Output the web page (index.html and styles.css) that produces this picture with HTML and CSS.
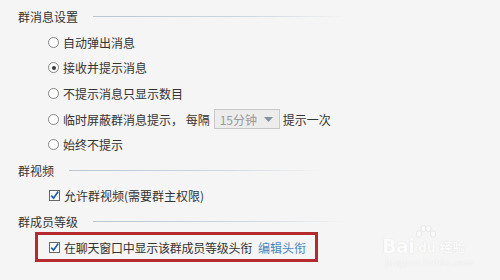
FILE: index.html
```html
<!DOCTYPE html>
<html lang="zh">
<head>
<meta charset="utf-8">
<link rel="stylesheet" href="styles.css">
</head>
<body>
<div class="page">
  <div class="heading"><span>群消息设置</span><i class="rule"></i></div>
  <div class="row opt"><span class="radio"></span>自动弹出消息</div>
  <div class="row opt"><span class="radio on"></span>接收并提示消息</div>
  <div class="row opt"><span class="radio"></span>不提示消息只显示数目</div>
  <div class="row opt"><span class="radio"></span>临时屏蔽群消息提示，&nbsp;每隔<span class="select"><span class="val">15分钟</span><svg class="arrow" width="9" height="5" viewBox="0 0 9 5"><path d="M0 0H9L4.5 5Z" fill="#8391a0"/></svg></span>提示一次</div>
  <div class="row opt"><span class="radio"></span>始终不提示</div>
  <div class="heading"><span>群视频</span><i class="rule"></i></div>
  <div class="row opt"><span class="check"><svg width="11" height="11" viewBox="0 0 11 11"><path d="M2.2 5.6L4.6 8.2L9.2 1.6" fill="none" stroke="#1d5fae" stroke-width="1.7"/></svg></span>允许群视频(需要群主权限)</div>
  <div class="heading"><span>群成员等级</span><i class="rule"></i></div>
  <div class="row boxed"><div class="redbox"><span class="check"><svg width="11" height="11" viewBox="0 0 11 11"><path d="M2.2 5.6L4.6 8.2L9.2 1.6" fill="none" stroke="#1d5fae" stroke-width="1.7"/></svg></span><span class="label">在聊天窗口中显示该群成员等级头衔</span><a class="link">编辑头衔</a></div></div>
  <div class="wm">
    <div class="wm-top"><span class="wm-bai">Bai</span><span class="wm-du">du<svg class="paw" width="22" height="18" viewBox="0 0 22 18"><g fill="#fbfbfb" stroke="#e2e2e2" stroke-width="0.8"><ellipse cx="4" cy="10" rx="2.6" ry="3.2"/><ellipse cx="8.5" cy="4.5" rx="2.6" ry="3.2"/><ellipse cx="13.5" cy="4.5" rx="2.6" ry="3.2"/><ellipse cx="18" cy="10" rx="2.6" ry="3.2"/></g></svg></span><span class="wm-jy">经验</span></div>
    <div class="wm-url">jingyan.baidu.com</div>
  </div>
</div>
</body>
</html>
```
FILE: styles.css
```css
html, body {
  margin: 0;
  padding: 0;
  background: #f5f5f5;
}
.page {
  position: relative;
  width: 500px;
  height: 280px;
  overflow: hidden;
  padding-top: 4px;
  box-sizing: border-box;
  font-family: "Noto Sans CJK SC", "Microsoft YaHei", sans-serif;
  font-size: 12px;
  color: #333;
  white-space: nowrap;
}
.heading, .row {
  height: 25.6px;
  display: flex;
  align-items: center;
}
.heading {
  padding-left: 18px;
}
.rule {
  display: block;
  width: 257px;
  height: 1px;
  margin-left: 15px;
  background: linear-gradient(to right, #b9c6d2, #cdd7e0 60%, rgba(220,226,232,0));
}
.opt {
  padding-left: 48px;
}
.radio {
  width: 11px;
  height: 11px;
  box-sizing: border-box;
  border: 1px solid #858585;
  border-radius: 50%;
  background: #fff;
  margin-right: 4px;
  position: relative;
  flex: none;
}
.radio.on::after {
  content: "";
  position: absolute;
  left: 2.5px;
  top: 2.5px;
  width: 4px;
  height: 4px;
  border-radius: 50%;
  background: #3a3a3a;
}
.select {
  display: inline-flex;
  align-items: center;
  justify-content: space-between;
  width: 66px;
  height: 20px;
  box-sizing: border-box;
  border: 1px solid #c9c9c9;
  background: #ececec;
  margin: 0 3px 0 4px;
  padding: 0 6px 0 5px;
  color: #999;
}
.check {
  width: 11px;
  height: 11px;
  box-sizing: border-box;
  border: 1px solid #666;
  background: #fff;
  margin-right: 4px;
  flex: none;
  display: flex;
}
.check svg {
  margin: -1px;
}
.opt .check {
  margin-left: 1px;
}
.boxed {
  padding-left: 35px;
}
.redbox {
  display: flex;
  align-items: center;
  height: 30px;
  box-sizing: border-box;
  border: 3px solid #b52a2d;
  padding: 0 10px 0 11px;
  width: 283px;
}
.label {
  letter-spacing: -0.25px;
}
.link {
  color: #4a86c0;
  margin-left: 6px;
}
.wm {
  position: absolute;
  left: 382px;
  top: 224px;
  color: #fbfbfb;
  text-shadow: 0 0 1px #d8d8d8;
}
.wm-top {
  display: flex;
  align-items: flex-end;
  font-family: "DejaVu Sans", sans-serif;
  font-weight: bold;
  height: 32px;
}
.wm-bai {
  font-size: 19px;
  line-height: 20px;
  letter-spacing: -0.5px;
}
.wm-du {
  position: relative;
  font-size: 12px;
  line-height: 15px;
  margin-left: 4px;
}
.paw {
  position: absolute;
  left: -3px;
  top: -17px;
}
.wm-jy {
  font-family: "Noto Sans CJK SC", sans-serif;
  font-weight: bold;
  font-size: 13px;
  line-height: 18px;
  margin-left: 4px;
}
.wm-url {
  font-family: "DejaVu Serif", serif;
  font-size: 9.5px;
  margin-top: 1px;
  margin-left: 3px;
}
```
